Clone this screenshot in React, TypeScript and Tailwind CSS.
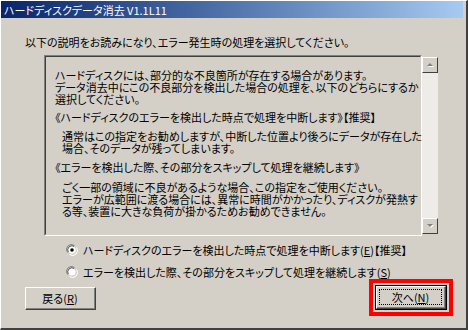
import React from "react";

const font = {
  fontFamily: '"Noto Sans CJK JP", "Noto Sans", sans-serif',
  fontFeatureSettings: '"palt"',
};

function Radio({ checked }: { checked: boolean }) {
  return (
    <svg width="12" height="12" viewBox="0 0 12 12" className="shrink-0">
      <path d="M1.5 8.5 A5 5 0 0 1 8.5 1.5" fill="none" stroke="#808080" strokeWidth="1" />
      <path d="M2.5 8 A4 4 0 0 1 8 2.5" fill="none" stroke="#404040" strokeWidth="1" />
      <path d="M3.5 10.5 A5 5 0 0 0 10.5 3.5" fill="none" stroke="#ffffff" strokeWidth="1" />
      <circle cx="6" cy="6" r="3.6" fill="#ffffff" />
      {checked && <circle cx="6" cy="6" r="1.8" fill="#000000" />}
    </svg>
  );
}

function Arrow({ up }: { up: boolean }) {
  return (
    <div className="w-[16px] h-[16px] bg-[#d4d0c8] border-t border-l border-[#ffffff] border-r border-b border-r-[#404040] border-b-[#404040] flex items-center justify-center">
      <svg width="9" height="6" viewBox="0 0 9 6">
        {up ? (
          <>
            <path d="M2 5 L5 2 L8 5 Z" fill="#ffffff" />
            <path d="M1 4 L4 1 L7 4 Z" fill="#808080" />
          </>
        ) : (
          <>
            <path d="M2 2 L8 2 L5 5 Z" fill="#ffffff" />
            <path d="M1 1 L7 1 L4 4 Z" fill="#808080" />
          </>
        )}
      </svg>
    </div>
  );
}

export default function App() {
  return (
    <div
      className="w-[468px] h-[330px] bg-[#d4d0c8] text-[11px] leading-[12px] text-black overflow-hidden flex flex-col border-t border-l border-[#ffffff] border-r-2 border-b-2 border-r-[#404040] border-b-[#404040]"
      style={font}
    >
      {/* Title bar */}
      <div className="h-[17px] mr-[3px] flex items-center pl-[3px] text-white bg-gradient-to-r from-[#0a246a] to-[#a6caf0] whitespace-nowrap">
        ハードディスクデータ消去 V1.1L11
      </div>

      {/* Body */}
      <div className="flex flex-col pl-[24px] pt-[18px]">
        <div className="h-[12px] whitespace-nowrap">以下の説明をお読みになり、エラー発生時の処理を選択してください。</div>

        {/* Text box */}
        <div className="ml-[19px] mt-[7px] w-[378px] h-[181px] border-t border-l border-[#808080] border-r border-b border-r-[#ffffff] border-b-[#ffffff]">
          <div className="w-full h-full flex border-t border-l border-[#404040] border-r border-b border-r-[#d4d0c8] border-b-[#d4d0c8]">
            <div className="flex-1 pl-[9px] pt-[12px] whitespace-nowrap">
              <div>ハードディスクには、部分的な不良箇所が存在する場合があります。</div>
              <div>データ消去中にこの不良部分を検出した場合の処理を、以下のどちらにするか</div>
              <div>選択してください。</div>
              <div className="mt-[6px]">《ハードディスクのエラーを検出した時点で処理を中断します》【推奨】</div>
              <div className="mt-[7px] pl-[7px]">通常はこの指定をお勧めしますが、中断した位置より後ろにデータが存在した</div>
              <div className="pl-[7px]">場合、そのデータが残ってしまいます。</div>
              <div className="mt-[7px]">《エラーを検出した際、その部分をスキップして処理を継続します》</div>
              <div className="mt-[8px] pl-[7px]">ごく一部の領域に不良があるような場合、この指定をご使用ください。</div>
              <div className="pl-[7px]">エラーが広範囲に渡る場合には、異常に時間がかかったり、ディスクが発熱す</div>
              <div className="pl-[7px]">る等、装置に大きな負荷が掛かるためお勧めできません。</div>
            </div>
            <div className="w-[16px] flex flex-col bg-[#eeece8]">
              <Arrow up={true} />
              <div className="flex-1" />
              <Arrow up={false} />
            </div>
          </div>
        </div>

        {/* Radios */}
        <div className="ml-[41px] mt-[8px] flex items-center gap-[5px] h-[12px] whitespace-nowrap">
          <Radio checked={true} />
          <span>
            ハードディスクのエラーを検出した時点で処理を中断します(<u>E</u>)【推奨】
          </span>
        </div>
        <div className="ml-[41px] mt-[10px] flex items-center gap-[5px] h-[12px] whitespace-nowrap">
          <Radio checked={false} />
          <span>
            エラーを検出した際、その部分をスキップして処理を継続します(<u>S</u>)
          </span>
        </div>

        {/* Buttons */}
        <div className="flex items-start justify-between mt-[1px] pr-[13px]">
          <div className="mt-[8px] w-[71px] h-[23px] bg-[#d4d0c8] border-t border-l border-[#ffffff] border-r border-b border-r-[#404040] border-b-[#404040]">
            <div className="w-full h-full flex items-center justify-center border-r border-b border-[#808080]">
              戻る(<u>R</u>)
            </div>
          </div>
          <div className="border-4 border-[#ff0000] p-[2px]">
            <div className="w-[72px] h-[25px] border border-black">
              <div className="w-full h-full bg-[#d4d0c8] border-t border-l border-[#ffffff] border-r border-b border-r-[#404040] border-b-[#404040]">
                <div className="w-full h-full border-r border-b border-[#808080] p-[2px]">
                  <div className="w-full h-full flex items-center justify-center border border-dotted border-black">
                    次へ(<u>N</u>)
                  </div>
                </div>
              </div>
            </div>
          </div>
        </div>
      </div>
    </div>
  );
}
